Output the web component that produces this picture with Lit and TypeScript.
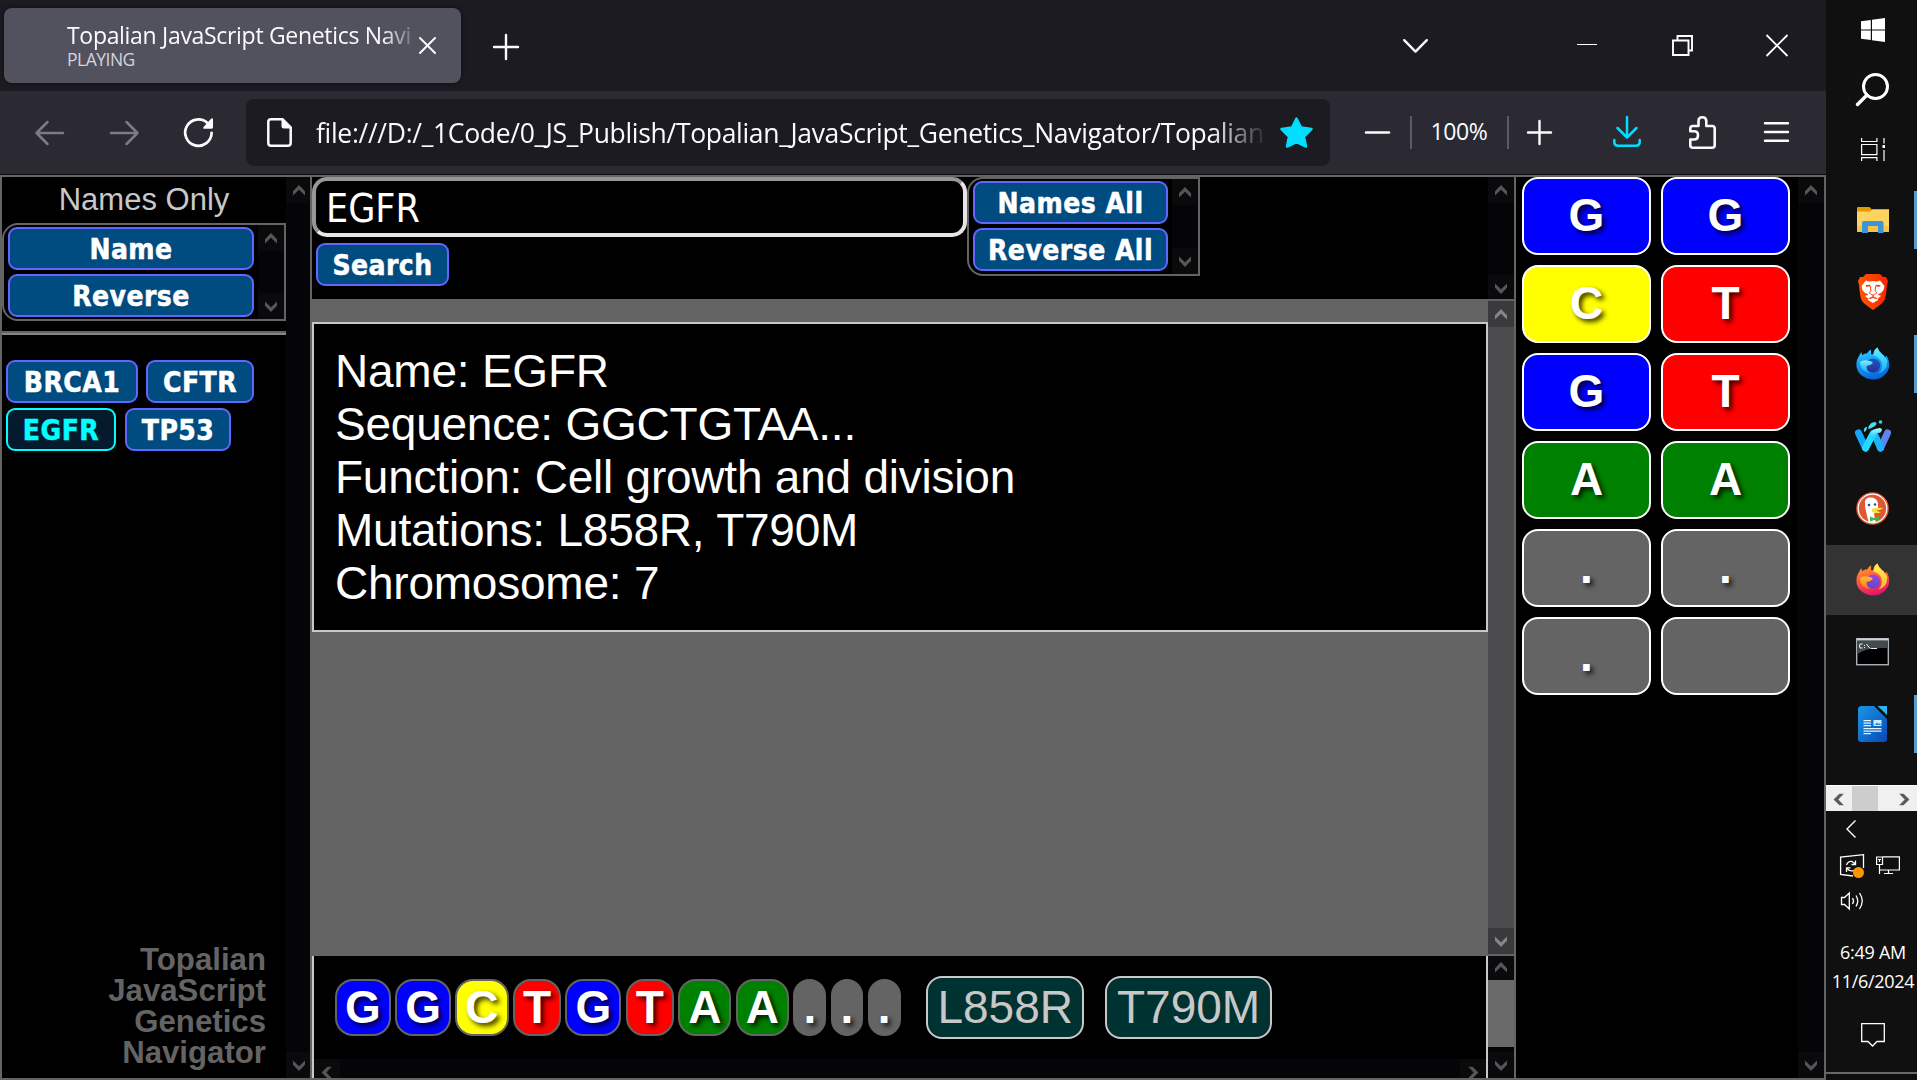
import { LitElement, html, svg, css, nothing } from "lit";
import { customElement, property } from "lit/decorators.js";

/* ---------- scroll bars ---------- */

@customElement("scroll-bar")
export class ScrollBar extends LitElement {
  @property({ reflect: true }) axis: "y" | "x" = "y";
  @property({ reflect: true }) tone: "dark" | "grey" | "light" = "dark";
  @property({ type: Number }) thumb = 0;

  static styles = css`
    :host {
      display: flex;
      flex: none;
      flex-direction: column;
      overflow: hidden;
      width: 26px;
      background: #050507;
      color: #565656;
      --btn: #0a0a0c;
      --thumb: #6a6a6a;
    }
    :host([axis="x"]) {
      flex-direction: row;
      width: auto;
      height: 26px;
    }
    :host([tone="grey"]) {
      background: #4c4c4e;
      color: #868686;
      --btn: #3a3a3c;
    }
    :host([tone="light"]) {
      background: #f0f0f0;
      color: #5c5c5c;
      --btn: #f0f0f0;
      --thumb: #cdcdcd;
    }
    .btn {
      display: grid;
      place-items: center;
      flex: none;
      width: 26px;
      height: 26px;
      background: var(--btn);
    }
    .thumb { flex: none; background: var(--thumb); }
    .track { flex: 1; min-height: 0; }
    svg { display: block; fill: currentColor; }
    .left { transform: rotate(-90deg); }
    .right { transform: rotate(90deg); }
    .down { transform: rotate(180deg); }
  `;

  private arrow(dir: string) {
    return html`<div class="btn">
      <svg class=${dir} width="12" height="11" viewBox="0 0 12 11">
        <path d="M6 0 12 6.2V10.6L6 4.800 0 10.600V6.200Z" />
      </svg>
    </div>`;
  }

  render() {
    const dim = this.axis === "y" ? "height" : "width";
    return html`
      ${this.arrow(this.axis === "y" ? "up" : "left")}
      ${this.thumb ? html`<div class="thumb" style="${dim}:${this.thumb}px"></div>` : nothing}
      <div class="track"></div>
      ${this.arrow(this.axis === "y" ? "down" : "right")}
    `;
  }
}

/* ---------- browser chrome ---------- */

@customElement("browser-chrome")
export class BrowserChrome extends LitElement {
  static styles = css`
    :host {
      display: block;
      font-family: "Open Sans", "Noto Sans", sans-serif;
      color: #fbfbfe;
    }
    svg { display: block; flex: none; overflow: visible; }
    .tabs {
      display: flex;
      align-items: center;
      height: 91px;
      background: #1c1b22;
      padding-left: 4px;
      box-sizing: border-box;
    }
    .tab {
      display: flex;
      align-items: center;
      width: 457px;
      height: 75px;
      padding-left: 63px;
      box-sizing: border-box;
      border-radius: 8px;
      background: #52525e;
      box-shadow: 0 0 5px #0008;
    }
    .labels { width: 345px; margin-top: -2px; white-space: nowrap; flex: none; }
    .title {
      font-size: 23px;
      line-height: 30px;
      letter-spacing: -0.31px;
      mask-image: linear-gradient(90deg, #000 315px, #0003 345px);
    }
    .state { font-size: 17.5px; line-height: 19px; letter-spacing: -0.5px; color: #d4d4dc; }
    .close { margin-left: 7px; }
    .new { margin-left: 33px; margin-top: 2px; }
    .wins { display: flex; align-items: center; margin-left: auto; padding-right: 38px; }
    .bar {
      display: flex;
      align-items: center;
      height: 83px;
      background: #2b2a33;
      box-sizing: border-box;
      padding: 0 37px 0 35px;
    }
    .url {
      display: flex;
      align-items: center;
      width: 1084px;
      height: 67px;
      margin-left: 33px;
      padding-left: 21px;
      box-sizing: border-box;
      border-radius: 8px;
      background: #1c1b22;
    }
    .addr {
      width: 949px;
      margin-left: 24px;
      font-size: 26.5px;
      line-height: 38px;
      letter-spacing: -0.32px;
      white-space: nowrap;
      mask-image: linear-gradient(90deg, #000 895px, #0000 952px);
    }
    .star { margin-left: 15px; }
    .sep { width: 2px; height: 33px; background: #5b5a66; }
    .pct { width: 95px; text-align: center; font-size: 23px; letter-spacing: -0.4px; line-height: 30px; padding: 0 1px 3px 0; box-sizing: border-box; }
  `;

  render() {
    const s = "#fbfbfe";
    return html`
      <div class="tabs">
        <div class="tab">
          <div class="labels">
            <div class="title">Topalian JavaScript Genetics Navi</div>
            <div class="state">PLAYING</div>
          </div>
          <svg class="close" width="17" height="17" viewBox="0 0 17 17" stroke=${s} stroke-width="2" stroke-linecap="round">
            <path d="M1 1 16 16M16 1 1 16" />
          </svg>
        </div>
        <svg class="new" width="24" height="24" viewBox="0 0 24 24" stroke=${s} stroke-width="2.4" stroke-linecap="round">
          <path d="M12 0V24M0 12H24" />
        </svg>
        <div class="wins">
          <svg width="25" height="14" viewBox="0 0 25 14" fill="none" stroke=${s} stroke-width="2.4" stroke-linecap="round" stroke-linejoin="round">
            <path d="M1.2 1.2 12.5 12.6 23.8 1.2" />
          </svg>
          <svg style="margin-left:149px;margin-top:-2px" width="20" height="2" viewBox="0 0 20 2"><path d="M0 .5H20" stroke="#fff" /></svg>
          <svg style="margin-left:75px" width="21" height="21" viewBox="0 0 21 21" fill="none" stroke="#fff" stroke-width="1.9">
            <path d="M1 5.5H16.5V20H1ZM5.5 5V1H20V15.5H17" />
          </svg>
          <svg style="margin-left:73px" width="22" height="21" viewBox="0 0 22 21" stroke="#fff" stroke-width="1.8">
            <path d="M.5 0 21.5 21M21.5 0 .5 21" />
          </svg>
        </div>
      </div>
      <div class="bar">
        <svg width="29" height="24" viewBox="0 0 29 24" fill="none" stroke="#7c7b83" stroke-width="2.5" stroke-linecap="round" stroke-linejoin="round">
          <path d="M28 12H1.5M12.5 1 1.5 12 12.5 23" />
        </svg>
        <svg style="margin-left:46px" width="29" height="24" viewBox="0 0 29 24" fill="none" stroke="#7c7b83" stroke-width="2.5" stroke-linecap="round" stroke-linejoin="round">
          <path d="M1 12H27.5M16.500 1 27.5 12 16.500 23" />
        </svg>
        <svg style="margin-left:45px" width="29" height="29" viewBox="0 0 29 29">
          <path d="M27.600 14.800A13.200 13.200 0 1 1 23.500 5.100" fill="none" stroke=${s} stroke-width="2.700" stroke-linecap="round" />
          <path d="M29 1V9.300Q29 10.800 27.500 10.800H20.200Q18.300 10.500 19.600 9L26.800 .900Q28.300-.3 29 1Z" fill=${s} />
        </svg>
        <div class="url">
          <svg width="25" height="29" viewBox="0 0 25 29">
            <path d="M4 1.300H15.500L23.700 9.500V25Q23.700 27.700 21 27.700H4Q1.300 27.700 1.300 25V4Q1.300 1.300 4 1.300Z" fill="none" stroke=${s} stroke-width="2.500" />
            <path d="M14.500 .5H16L24.500 9V10.500H17Q14.500 10.500 14.500 8Z" fill=${s} />
          </svg>
          <div class="addr">file:///D:/_1Code/0_JS_Publish/Topalian_JavaScript_Genetics_Navigator/Topalian</div>
          <svg class="star" width="33" height="31" viewBox="0 0 33 31">
            <path d="M16.500 1.500 21 10.500 31.500 12 24 19.500 26 29.500 16.500 25 7 29.500 9 19.500 1.500 12 12 10.500Z" fill="#00ddff" stroke="#00ddff" stroke-width="2.500" stroke-linejoin="round" />
          </svg>
        </div>
        <svg style="margin-left:35px" width="25" height="3" viewBox="0 0 25 3"><path d="M1 1.500H24" stroke=${s} stroke-width="2.500" stroke-linecap="round" /></svg>
        <div class="sep" style="margin-left:20px"></div>
        <div class="pct">100%</div>
        <div class="sep"></div>
        <svg style="margin-left:18px" width="25" height="25" viewBox="0 0 25 25" stroke=${s} stroke-width="2.400" stroke-linecap="round">
          <path d="M12.500 1V24M1 12.500H24" />
        </svg>
        <svg style="margin-left:60.500px;margin-top:-2px" width="28" height="31" viewBox="0 0 28 31" fill="none" stroke="#00ddff" stroke-width="2.500" stroke-linecap="round" stroke-linejoin="round">
          <path d="M14 1V21M4.500 12 14 21.500 23.500 12M1.300 24V26Q1.300 29.700 5 29.700H23Q26.700 29.700 26.700 26V24" />
        </svg>
        <svg style="margin-left:48px" width="27" height="33" viewBox="0 0 27 33" fill="none" stroke=${s} stroke-width="2.600" stroke-linejoin="round">
          <path d="M9.500 10V5Q9.500 1.300 13.300 1.300T17.300 5V10H23Q25.700 10 25.700 12.500V29.200Q25.700 31.700 23 31.700H4Q1.300 31.700 1.300 29.200V23.500H5Q9 23.500 9 19.300T5 15.200H1.300V12.500Q1.300 10 4 10Z" />
        </svg>
        <svg style="margin-left:48px;margin-top:-2px" width="25" height="20" viewBox="0 0 25 20" stroke=${s} stroke-width="2.400" stroke-linecap="round">
          <path d="M1 1.300H24M1 10H24M1 18.700H24" />
        </svg>
      </div>
    `;
  }
}

/* ---------- genetics page ---------- */

const SEQUENCE = [..."GGCTGTAA..."];
const GENES = ["BRCA1", "CFTR", "EGFR", "TP53"];
const FACTS = [
  "Name: EGFR",
  "Sequence: GGCTGTAA...",
  "Function: Cell growth and division",
  "Mutations: L858R, T790M",
  "Chromosome: 7",
];
const baseClass = (b: string) => (/[GCTA]/.test(b) ? b.toLowerCase() : "none");

@customElement("genetics-page")
export class GeneticsPage extends LitElement {
  static styles = css`
    :host {
      display: grid;
      grid-template-columns: 308px 1202px 308px;
      gap: 2px;
      padding: 2px;
      box-sizing: border-box;
      border-top: 1px solid #0c0c0d;
      background: #646464;
      font-family: "Liberation Sans", Arial, sans-serif;
      color: #fff;
    }
    .side { display: flex; overflow: hidden; background: #000; min-height: 0; }
    .names { display: flex; flex-direction: column; width: 284px; flex: none; }
    .heading { font-size: 31px; line-height: 45px; padding-bottom: 1px; text-align: center; color: #c8c8c8; }
    .box {
      display: flex;
      box-sizing: border-box;
      border: 2px solid #646464;
      border-radius: 16px 0 0 16px;
      padding-left: 4px;
    }
    .box.left { width: 284px; height: 98px; }
    .box.top { width: 233px; height: 99px; }
    .stack { display: flex; flex-direction: column; gap: 4px; padding-top: 2px; flex: 1; margin-right: 4px; }
    .btn {
      height: 43px;
      padding: 0;
      box-sizing: border-box;
      border: 2px solid #6464ff;
      border-radius: 9px;
      background: #004b80;
      color: #fff;
      font: bold 28px/41px "DejaVu Sans Condensed", "DejaVu Sans", "Noto Sans", sans-serif;
      font-stretch: condensed;
      letter-spacing: 0.45px;
      -webkit-text-stroke: 0.5px currentColor;
      text-align: center;
      white-space: nowrap;
    }
    .btn.on { background: #051a2c; border-color: #0ff; color: #0ff; }
    .rule { height: 2px; margin-top: 10px; background: #646464; border-bottom: 2px solid #858585; }
    .genes { display: flex; flex-wrap: wrap; gap: 5px 8px; padding: 25px 4px; }
    .w0 { width: 132px; } .w1 { width: 108px; } .w2 { width: 110px; } .w3 { width: 106px; margin-left: 1px; }
    .brand {
      margin-top: auto;
      padding: 0 20px 10px 0;
      text-align: right;
      font: bold 31.2px/31px "Liberation Sans", Arial, sans-serif;
      color: #646464;
    }
    .center { display: grid; grid-template-rows: 122px 653px 122px; row-gap: 2px; min-height: 0; }
    .pane { display: flex; min-height: 0; overflow: hidden; }
    .search { display: flex; align-items: flex-start; flex: 1; background: #000; }
    .search + scroll-bar { margin-bottom: -2px; }
    .finder { width: 655px; flex: none; }
    .field {
      height: 60px;
      box-sizing: border-box;
      border: 4px solid;
      border-color: #979797 #e6e6e6 #e6e6e6 #979797;
      border-radius: 15px;
      padding-left: 10px;
      font: 39px/56px "DejaVu Sans Condensed", "DejaVu Sans", "Noto Sans", sans-serif;
      font-stretch: condensed;
    }
    .go { display: inline-block; width: 133px; margin: 6px 0 0 4px; }
    .result { flex: 1; padding-top: 21px; }
    .card {
      height: 310px;
      box-sizing: border-box;
      border: 2px solid #c8c8c8;
      background: #000;
      padding: 21px 0 0 21px;
      font-size: 46px;
      line-height: 53px;
      letter-spacing: -0.23px;
    }
    .strip {
      display: flex;
      flex-direction: column;
      flex: 1;
      min-width: 0;
      overflow: hidden;
      border: solid #c8c8c8;
      border-width: 0 2px;
      background: #000;
    }
    .strip + scroll-bar { margin-top: -2px; }
    .chips { display: flex; flex: none; align-items: center; height: 103px; box-sizing: border-box; padding-left: 21px; }
    .chip {
      box-sizing: border-box;
      height: 57px;
      margin-right: 4.4px;
      padding: 0 8px;
      border: 2px solid #646464;
      border-radius: 18px;
      font: bold 46px/53px "Liberation Sans", Arial, sans-serif;
      text-shadow: 3px 3px 5px #000c;
    }
    .mut {
      box-sizing: border-box;
      height: 63px;
      padding: 0 9.5px;
      margin-left: 21px;
      border: 2px solid #c8c8c8;
      border-radius: 16px;
      background: #003232;
      color: #c8c8c8;
      font-size: 46px;
      line-height: 59px;
    }
    .g { background: #00f; }
    .c { background: #ff0; }
    .t { background: #f00; }
    .a { background: green; }
    .none { background: #646464; }
    .tiles {
      display: grid;
      grid-template-columns: 129px 129px;
      grid-auto-rows: 78px;
      gap: 10px;
      align-content: start;
      width: 282px;
      padding-left: 6px;
      box-sizing: border-box;
      flex: none;
    }
    .tile {
      border: 2px solid #fff;
      border-radius: 16px;
      text-align: center;
      font: bold 46px/72px "Liberation Sans", Arial, sans-serif;
      text-shadow: 3px 3px 5px #000c;
    }
  `;

  render() {
    return html`
      <section class="side">
        <div class="names">
          <div class="heading">Names Only</div>
          <div class="box left">
            <div class="stack"><div class="btn">Name</div><div class="btn">Reverse</div></div>
            <scroll-bar></scroll-bar>
          </div>
          <div class="rule"></div>
          <div class="genes">
            ${GENES.map((g, i) => html`<div class="btn w${i} ${g === "EGFR" ? "on" : ""}">${g}</div>`)}
          </div>
          <div class="brand">Topalian<br />JavaScript<br />Genetics<br />Navigator</div>
        </div>
        <scroll-bar></scroll-bar>
      </section>

      <section class="center">
        <div class="pane">
          <div class="search">
            <div class="finder">
              <div class="field">EGFR</div>
              <div class="btn go">Search</div>
            </div>
            <div class="box top">
              <div class="stack"><div class="btn">Names All</div><div class="btn">Reverse All</div></div>
              <scroll-bar></scroll-bar>
            </div>
          </div>
          <scroll-bar></scroll-bar>
        </div>
        <div class="pane">
          <div class="result">
            <div class="card">${FACTS.map((f) => html`<div>${f}</div>`)}</div>
          </div>
          <scroll-bar tone="grey"></scroll-bar>
        </div>
        <div class="pane">
          <div class="strip">
            <div class="chips">
              ${SEQUENCE.map((b) => html`<div class="chip ${baseClass(b)}">${b}</div>`)}
              <div class="mut">L858R</div>
              <div class="mut">T790M</div>
            </div>
            <scroll-bar axis="x"></scroll-bar>
          </div>
          <scroll-bar thumb="67"></scroll-bar>
        </div>
      </section>

      <section class="side">
        <div class="tiles">
          ${[...SEQUENCE, ""].map((b) => html`<div class="tile ${baseClass(b)}">${b}</div>`)}
        </div>
        <scroll-bar></scroll-bar>
      </section>
    `;
  }
}

/* ---------- task bar ---------- */

const foxBody = (id: string) => svg`
  <path fill="url(#${id}b)" d="M3 9Q4 6 6 5L6 8Q9 6 11.500 6Q13 3 15.500 2L15.500 7L18 7Q18 2 22 0Q23 4 27.500 7.500Q29 8 29.500 10L31.500 8.500Q35 14 34 20.500A17 15.500 0 0 1 .5 19.500Q0 13 3 9Z"/>
  <path fill="url(#${id}t)" d="M22 0Q18 3 18 8Q24 10 26 15Q28 22 23 27Q32 24 32 16Q33 12 29.500 10Q29 8 27.500 7.500Q23 4 22 0Z"/>
  <circle cx="17.500" cy="18.500" r="7.300" fill="url(#${id}g)"/>
  <path fill="url(#${id}h)" d="M4 15Q8 12 12 13.500Q16 14 17.500 16Q15 18.500 11 19Q10 24 15 26Q8 26 5 20Z"/>`;

const fox = (id: string, body: string[], tail: string[], globe: string[], head: string[]) => html`
  <svg width="34" height="35" viewBox="0 0 35 35">
    <defs>
      <linearGradient id="${id}b" x1=".2" y1="0" x2=".5" y2="1"><stop stop-color=${body[0]} /><stop offset=".5" stop-color=${body[1]} /><stop offset="1" stop-color=${body[2]} /></linearGradient>
      <linearGradient id="${id}t" x1="0" y1="0" x2="0" y2="1"><stop stop-color=${tail[0]} /><stop offset="1" stop-color=${tail[1]} /></linearGradient>
      <linearGradient id="${id}g" x1="0" y1="0" x2="0" y2="1"><stop stop-color=${globe[0]} /><stop offset="1" stop-color=${globe[1]} /></linearGradient>
      <linearGradient id="${id}h" x1="0" y1="0" x2="0" y2="1"><stop stop-color=${head[0]} /><stop offset="1" stop-color=${head[1]} /></linearGradient>
    </defs>
    ${foxBody(id)}
  </svg>`;

const folder = html`<svg width="32" height="26" viewBox="0 0 32 26">
  <path d="M0 1Q0 0 1 0H12.500L14.500 2V6H0Z" fill="#df9c00" />
  <path d="M0 4.500H13L15 2.300H32V24Q32 25 31 25H1Q0 25 0 24Z" fill="#ffd35f" />
  <path d="M0 19H32V24Q32 25 31 25H1Q0 25 0 24Z" fill="#f7c443" />
  <path d="M5 26V16Q5 14 7 14H24.500Q26.500 14 26.500 16V26H21V19H11V26Z" fill="#3a95dd" />
</svg>`;

const brave = html`<svg width="30" height="36" viewBox="0 0 30 36">
  <defs><linearGradient id="br"><stop stop-color="#ff5601" /><stop offset=".5" stop-color="#ff4000" /><stop offset="1" stop-color="#ff1f01" /></linearGradient></defs>
  <path d="M8 0H22L25 3L28 3L30 7L29 11Q28 24 26 27Q24 30 15 36Q6 30 4 27Q2 24 1 11L0 7L2 3H5Z" fill="url(#br)" />
  <path d="M8 6.500Q11 8 15 7Q19 8 22 6.500L26.500 12L25.500 16L21.500 21L23 22L20 24.500L20 26L15 29L10 26L10 24.500L7 22L8.500 21L4.500 16L3.500 12Z" fill="#fff" />
  <path d="M7.500 11 12.500 10.800 12 12.500 8 12.800ZM22.500 11 17.500 10.800 18 12.500 22 12.800ZM13 12 13.300 17 11.500 19 15 20.800 18.500 19 16.700 17 17 12 18 12.500 17.600 17 19.500 19 15.600 21.500V22.500L20 24.500 18 25 15 24 12 25 10 24.500 14.400 22.500V21.500L10.500 19 12.400 17 12 12.500ZM6.500 18.500 10.500 20.500 8.500 21.500ZM23.500 18.500 19.500 20.500 21.500 21.500Z" fill="#fb3f10" />
</svg>`;

const wave = html`<svg width="36" height="32" viewBox="0 0 36 32">
  <defs>
    <linearGradient id="w2" x1="0" y1="0" x2="0" y2="1"><stop stop-color="#b2fbff" /><stop offset="1" stop-color="#15c5ff" /></linearGradient>
  </defs>
  <g fill="none" stroke-width="7" stroke-linecap="round">
    <path d="M32.500 13 25.500 28" stroke="#5b84ee" />
    <path d="M19 13 25.500 28" stroke="#1bb4fa" />
    <path d="M3.500 13 10.500 28" stroke="#14a4f8" />
    <path d="M10.500 28 18 14" stroke="#22dafb" />
  </g>
  <path d="M15 15Q16 9 25 8Q29 9 25 13Q21 12 18 18Z" fill="url(#w2)" />
  <path d="M13 8Q15 2 20 2Q23 3 20 6Q17 8 14 9ZM9 10Q9 7 12 7Q12 11 9 12Z" fill="#43dff6" />
  <circle cx="25.500" cy="2" r="1.800" fill="#35d7ef" />
</svg>`;

const duck = html`<svg width="33" height="33" viewBox="0 0 33 33">
  <circle cx="16.500" cy="16.500" r="16.300" fill="#de5833" />
  <circle cx="16.500" cy="16.500" r="14.300" fill="none" stroke="#fff" stroke-width="1.200" />
  <path d="M9 9Q10 5.500 14 5.500Q20 5 22 11L22 17L18 22L20 31Q16 31.500 12.500 30Q10 20 9 14Z" fill="#fff" />
  <circle cx="13" cy="13" r="1.300" fill="#2d4f8e" /><circle cx="19" cy="12.500" r="1.200" fill="#2d4f8e" />
  <path d="M16 17Q21 15 27 16Q25 18 20 18.500Q24 20 25 20.500Q20 22 16 20Z" fill="#fd3" />
  <path d="M14 24.500 18 26 23 24V29L18 28 14 29.500Z" fill="#43b649" />
</svg>`;

const term = html`<svg width="33" height="28" viewBox="0 0 33 28">
  <rect x=".7" y=".7" width="31.600" height="26" fill="#000" stroke="#a9b1b8" stroke-width="1.400" />
  <path d="M1.500 2.500H31.500V10Q10 9 1.500 16Z" fill="#444b4b" />
  <path d="M1 1.500H32" stroke="#ccd3da" stroke-width="2" />
  <path d="M6.500 6H4Q3 8 4 10H6.500M8.500 7V7.900M8.500 9V10M10.500 6 14 10.500M15 10.500H21" fill="none" stroke="#eee" stroke-width="1" />
</svg>`;

const writer = html`<svg width="29" height="36" viewBox="0 0 29 36">
  <defs><linearGradient id="wr" x1="0" y1="0" x2="1" y2="1"><stop stop-color="#1a96e6" /><stop offset="1" stop-color="#0a48b4" /></linearGradient></defs>
  <path d="M3.500 0H16L29 13V33Q29 36 26 36H3Q0 36 0 33V3.500Q0 0 3.500 0Z" fill="url(#wr)" />
  <path d="M19.500 0H29V9Z" fill="#2cb5f0" />
  <path d="M5.500 14.700H13M5.500 17.200H13M5.500 19.700H13M5.500 22.700H23.500M5.500 25.200H23.500M5.500 27.700H13" stroke="#e8f4ff" stroke-width="1.200" />
  <path d="M15.500 14H23.500V20H15.500Z" fill="#cdeeff" /><path d="M16.500 19 19 16.500 20.500 18 22 17 23 19Z" fill="#1a8ade" />
</svg>`;

@customElement("task-bar")
export class TaskBar extends LitElement {
  static styles = css`
    :host {
      display: flex;
      flex-direction: column;
      background: #101010;
      color: #fff;
      height: 1080px;
      overflow: hidden;
      font-family: "Open Sans", "Noto Sans", sans-serif;
    }
    svg { display: block; overflow: visible; flex: none; }
    .cell { display: grid; place-items: center; height: 60px; padding-left: 2px; flex: none; }
    .cell + .cell { padding-bottom: 2px; height: 58px; }
    .apps { display: flex; flex-direction: column; gap: 2px; padding: 5px 0 1px; }
    .apps .cell { height: 70px; padding-bottom: 0; }
    .cell.run { background: linear-gradient(#5d99c9, #5d99c9) right center / 3px 58px no-repeat; }
    .cell.on { background: #333; }
    scroll-bar { margin-top: 25px; height: 25px; border-top: 1px solid #fff; }
    .tray { display: flex; align-items: center; height: 36px; gap: 12px; padding-left: 14px; }
    .clock {
      margin-top: 19px;
      padding-left: 3px;
      text-align: center;
      font-size: 18px;
      line-height: 29px;
      letter-spacing: -0.3px;
      white-space: nowrap;
    }
    .note { display: grid; place-items: center; margin-top: 27px; padding-left: 3px; }
    .base { margin-top: auto; height: 6px; border-top: 2px solid #686868; background: #0d0d0d; }
  `;

  render() {
    const apps = [
      { icon: folder, cls: "run" },
      { icon: brave, cls: "" },
      { icon: fox("n", ["#3fd0ff", "#0a9cf5", "#0a63d8"], ["#62f2ff", "#1da7f2"], ["#2158c8", "#2a2f92"], ["#7bf0ff", "#1ca0f0"]), cls: "run" },
      { icon: wave, cls: "" },
      { icon: duck, cls: "" },
      { icon: fox("f", ["#ffa436", "#ff5a35", "#e3126f"], ["#fff44f", "#ffb03a"], ["#a047e0", "#5d47c8"], ["#ffbd2f", "#ff7a1f"]), cls: "on" },
      { icon: term, cls: "" },
      { icon: writer, cls: "run" },
    ];
    return html`
      <div class="cell">
        <svg width="24" height="24" viewBox="0 0 24 24" fill="#fff">
          <path d="M0 3.300 9.800 2V11.400H0ZM11 1.800 24 0V11.400H11ZM0 12.600H9.800V22L0 20.700ZM11 12.600H24V24L11 22.200Z" />
        </svg>
      </div>
      <div class="cell">
        <svg width="33" height="33" viewBox="0 0 33 33" fill="none" stroke="#fff" stroke-width="3">
          <circle cx="19.500" cy="13.500" r="12" /><path d="M11 22 1.500 31.500" stroke-width="3.400" stroke-linecap="round" />
        </svg>
      </div>
      <div class="cell">
        <svg width="24" height="23" viewBox="0 0 24 23" fill="none" stroke="#fff" stroke-width="1.200">
          <path d="M.6 6.500H15.900V16.700H.6ZM.6 0V3.500H15.900V0M.6 23V19.600H15.900V23M23 0V5.500M23 12V23" /><path d="M21.500 7H24V10H21.500Z" fill="#fff" stroke="none" />
        </svg>
      </div>
      <div class="apps">${apps.map((a) => html`<div class="cell ${a.cls}">${a.icon}</div>`)}</div>
      <scroll-bar axis="x" tone="light" thumb="26"></scroll-bar>
      <div class="tray" style="padding-left:20px">
        <svg width="10" height="18" viewBox="0 0 10 18" fill="none" stroke="#fff" stroke-width="1.400"><path d="M9.500 .5 1 9 9.500 17.500" /></svg>
      </div>
      <div class="tray">
        <svg width="24" height="23" viewBox="0 0 24 23" fill="none" stroke="#fff" stroke-width="1.300">
          <path d="M13 22 .6 20.500V3L23.500 .6V14" />
          <path d="M6.500 11Q8 7 12 7.500L15.500 10M15.500 6.500V10.500H11.500M14 16.500Q10 18 7 14.500M6.500 18V13.800H10.500" />
          <circle cx="18.500" cy="18.500" r="5.500" fill="#ff9400" stroke="none" />
        </svg>
        <svg width="24" height="18" viewBox="0 0 24 18" fill="none" stroke="#fff" stroke-width="1.200">
          <path d="M6.500 .8H23.400V14H4M.6 1H6.500V8.500H.6ZM3.500 8.500V18M8 17.500H17M12.500 14V17M2 3.500H5M3.500 3.500V6" />
        </svg>
      </div>
      <div class="tray">
        <svg width="23" height="18" viewBox="0 0 23 18" fill="none" stroke="#fff" stroke-width="1.300">
          <path d="M1.500 5.500H4.500L9.300 1V17L4.500 12.500H1.500ZM12.500 6Q14.500 9 12.500 12M16 3.500Q19.500 9 16 14.500M19.500 1Q25 9 19.500 17" />
        </svg>
      </div>
      <div class="clock">6:49 AM<br />11/6/2024</div>
      <div class="note">
        <svg width="24" height="24" viewBox="0 0 24 24" fill="none" stroke="#fff" stroke-width="1.300">
          <path d="M.7 .7H23.300V18.500H16L11.500 23 7 18.500H.7Z" />
        </svg>
      </div>
      <div class="base"></div>
    `;
  }
}

/* ---------- root ---------- */

@customElement("app-root")
export class AppRoot extends LitElement {
  static styles = css`
    :host {
      display: grid;
      grid-template-columns: 1826px 91px;
      height: 1080px;
      overflow: hidden;
      background: #101010;
    }
    .browser { display: grid; grid-template-rows: 174px 906px; min-width: 0; }
  `;

  render() {
    return html`
      <main class="browser">
        <browser-chrome></browser-chrome>
        <genetics-page></genetics-page>
      </main>
      <task-bar></task-bar>
    `;
  }
}
